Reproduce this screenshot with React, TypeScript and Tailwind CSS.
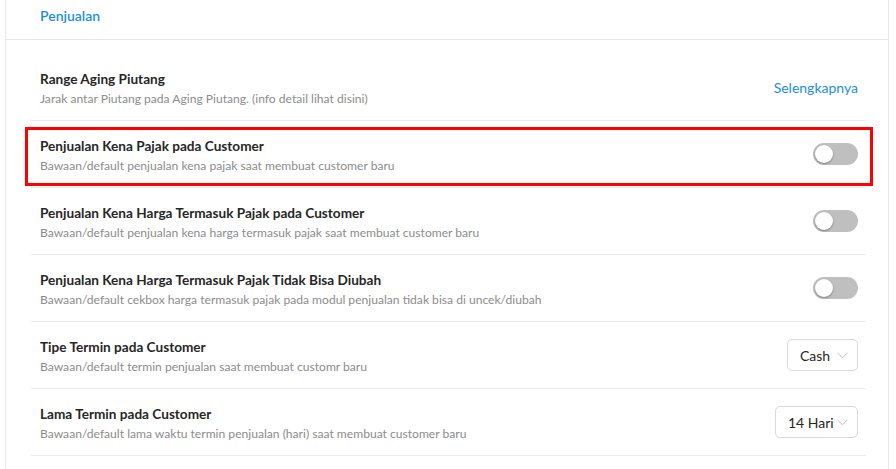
import React from "react";

type Row = {
  title: string;
  desc: string;
  control: "link" | "toggle" | "select";
  value?: string;
  selectW?: string;
};

const rows: Row[] = [
  { title: "Range Aging Piutang", desc: "Jarak antar Piutang pada Aging Piutang. (info detail lihat disini)", control: "link" },
  { title: "Penjualan Kena Pajak pada Customer", desc: "Bawaan/default penjualan kena pajak saat membuat customer baru", control: "toggle" },
  { title: "Penjualan Kena Harga Termasuk Pajak pada Customer", desc: "Bawaan/default penjualan kena harga termasuk pajak saat membuat customer baru", control: "toggle" },
  { title: "Penjualan Kena Harga Termasuk Pajak Tidak Bisa Diubah", desc: "Bawaan/default cekbox harga termasuk pajak pada modul penjualan tidak bisa di uncek/diubah", control: "toggle" },
  { title: "Tipe Termin pada Customer", desc: "Bawaan/default termin penjualan saat membuat customr baru", control: "select", value: "Cash", selectW: "w-[71px]" },
  { title: "Lama Termin pada Customer", desc: "Bawaan/default lama waktu termin penjualan (hari) saat membuat customer baru", control: "select", value: "14 Hari", selectW: "w-[83px]" },
];

function Toggle() {
  return (
    <div className="relative w-[45px] h-[22px] rounded-full bg-[#bfbfbf]">
      <div className="absolute left-[2px] top-[2px] w-[18px] h-[18px] rounded-full bg-white shadow-[0_1px_2px_rgba(0,0,0,0.35)]" />
    </div>
  );
}

function Select({ value, w }: { value: string; w: string }) {
  return (
    <div className={`${w} h-[32px] border border-[#d9d9d9] rounded-[5px] flex items-center justify-between pl-[12px] pr-[9px] bg-white`}>
      <span className="text-[14px] text-[#262626]">{value}</span>
      <svg width="11" height="7" viewBox="0 0 11 7" fill="none">
        <path d="M0.5 0.8 L5.5 5.8 L10.5 0.8" stroke="#bfbfbf" strokeWidth="1" />
      </svg>
    </div>
  );
}

export default function App() {
  return (
    <div
      className="relative w-[896px] h-[469px] bg-white overflow-hidden"
      style={{ fontFamily: "Lato, 'Liberation Sans', sans-serif" }}
    >
      <div className="ml-[5px] w-[884px] h-full border-l border-r border-[#e8e8e8]">
        <div className="h-[40px] border-b border-[#e8e8e8] pl-[34px] flex items-center">
          <span className="text-[14px] font-semibold text-[#1a8fe3] -mt-[8px]">Penjualan</span>
        </div>
        <div className="ml-[25px] mr-[22px] pt-[14px]">
          {rows.map((r) => (
            <div
              key={r.title}
              className="h-[67px] border-b border-[#ebebeb] pl-[9px] pr-[8px] flex items-center justify-between"
            >
              <div className="flex flex-col pt-[4px]">
                <div className="text-[13.6px] leading-[20px] font-bold text-[#262626]">{r.title}</div>
                <div className="text-[12.1px] leading-[20px] text-[#8c8c8c]">{r.desc}</div>
              </div>
              {r.control === "link" && (
                <span className="text-[14px] text-[#1a8fe3]">Selengkapnya</span>
              )}
              {r.control === "toggle" && <Toggle />}
              {r.control === "select" && <Select value={r.value!} w={r.selectW!} />}
            </div>
          ))}
        </div>
      </div>
      <div className="absolute left-[25px] top-[127px] w-[848px] h-[59px] border-[3px] border-[#ff0000]" />
    </div>
  );
}
